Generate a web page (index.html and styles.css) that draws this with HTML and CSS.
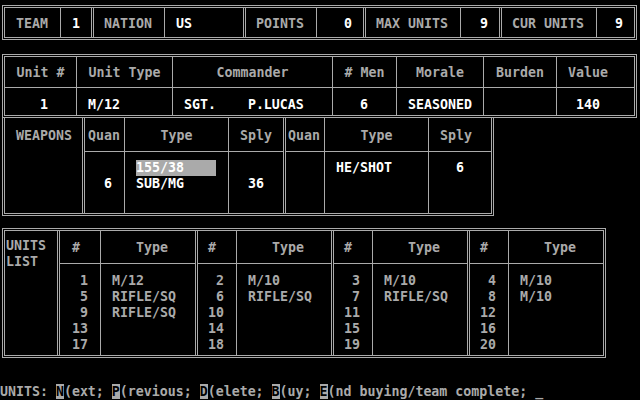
FILE: index.html
```html
<!doctype html>
<html lang="en">
<head>
<meta charset="UTF-8">
<title>Unit purchase</title>
<link rel="stylesheet" href="styles.css">
</head>
<body>
<div class="screen">

    <div class="box topbar">
        <div class="pair g1"><div class="lbl first">TEAM</div><div class="val">1</div></div>
        <div class="pair g2"><div class="lbl">NATION</div><div class="val left">US</div></div>
        <div class="pair g3"><div class="lbl">POINTS</div><div class="val">0</div></div>
        <div class="pair g4"><div class="lbl">MAX UNITS</div><div class="val">9</div></div>
        <div class="pair g5"><div class="lbl">CUR UNITS</div><div class="val">9</div></div>
    </div>

    <div class="box unit">
        <div class="hd">Unit #</div>
        <div class="hd">Unit Type</div>
        <div class="hd">Commander</div>
        <div class="hd"># Men</div>
        <div class="hd">Morale</div>
        <div class="hd">Burden</div>
        <div class="hd pad">Value</div>
        <div class="cell u-num">1</div>
        <div class="cell">M/12</div>
        <div class="cell">SGT.    P.LUCAS</div>
        <div class="cell u-men">6</div>
        <div class="cell">SEASONED</div>
        <div class="cell"></div>
        <div class="cell u-val">140</div>
    </div>

    <div class="box weapons">
        <div class="w-label">WEAPONS</div>
        <div class="wgrp wg1">
            <div class="hd quan">Quan</div>
            <div class="hd">Type</div>
            <div class="hd">Sply</div>
            <div class="cell low q1">6</div>
            <div class="cell type"><span class="sel">155/38</span><br>SUB/MG</div>
            <div class="cell low s1">36</div>
        </div>
        <div class="wgrp wg2">
            <div class="hd quan2">Quan</div>
            <div class="hd">Type</div>
            <div class="hd sply2">Sply</div>
            <div class="cell"></div>
            <div class="cell type">HE/SHOT</div>
            <div class="cell s2">6</div>
        </div>
    </div>

    <div class="box units">
        <div class="l-label">UNITS<br>LIST</div>
        <div class="lgrp first">
            <div class="hd hash">#</div>
            <div class="hd tp">Type</div>
            <div class="cell nums">1<br>5<br>9<br>13<br>17</div>
            <div class="cell types">M/12<br>RIFLE/SQ<br>RIFLE/SQ</div>
        </div>
        <div class="lgrp">
            <div class="hd hash">#</div>
            <div class="hd tp">Type</div>
            <div class="cell nums">2<br>6<br>10<br>14<br>18</div>
            <div class="cell types">M/10<br>RIFLE/SQ</div>
        </div>
        <div class="lgrp">
            <div class="hd hash">#</div>
            <div class="hd tp">Type</div>
            <div class="cell nums">3<br>7<br>11<br>15<br>19</div>
            <div class="cell types">M/10<br>RIFLE/SQ</div>
        </div>
        <div class="lgrp">
            <div class="hd hash">#</div>
            <div class="hd tp">Type</div>
            <div class="cell nums">4<br>8<br>12<br>16<br>20</div>
            <div class="cell types">M/10<br>M/10</div>
        </div>
    </div>

    <div class="status">UNITS: <span class="key">N</span>(ext; <span class="key">P</span>(revious; <span class="key">D</span>(elete; <span class="key">B</span>(uy; <span class="key">E</span>(nd buying/team complete; _</div>

</div>
</body>
</html>
```

FILE: styles.css
```css
* {
    box-sizing: border-box;
}

body {
    margin: 0;
    background-color: #000;
    color: #aaa;
    font: bold 13.288px/16px "DejaVu Sans Mono", monospace;
    overflow: hidden;
}

.screen {
    padding-top: 5px;
}

.box {
    margin-left: 2px;
    border: 3px double #aaa;
}

.lbl, .val, .hd, .cell, .status {
    white-space: pre;
}

/* top bar */

.topbar {
    display: flex;
    width: 635px;
    height: 35px;
}

.pair {
    display: grid;
}

.pair + .pair {
    border-left: 3px double #aaa;
}

.g1 { width: 86px; grid-template-columns: 55px 31px; }
.g2 { width: 152px; grid-template-columns: 70px 79px; }
.g3 { width: 120px; grid-template-columns: 70px 47px; }
.g4 { width: 136px; grid-template-columns: 94px 39px; }
.g5 { width: 135px; grid-template-columns: 94px 38px; }

.lbl {
    padding: 8px 0 5px 10px;
}

.lbl.first {
    padding-left: 11px;
}

.val {
    border-left: 1px solid #aaa;
    padding: 8px 11px 5px 0;
    text-align: right;
    color: #fff;
}

.val.left {
    text-align: left;
    padding-left: 11px;
}

/* unit row */

.unit {
    display: grid;
    grid-template-columns: 71px 96px 160px 64px 87px 73px 78px;
    grid-template-rows: 30px 28px;
    width: 635px;
    margin-top: 14px;
}

.unit > div:not(:nth-child(7n+1)) {
    border-left: 1px solid #aaa;
}

.unit .hd {
    padding-top: 8px;
    text-align: center;
}

.unit .hd.pad {
    text-align: left;
    padding-left: 11px;
}

.unit .cell {
    border-top: 1px solid #aaa;
    padding: 9px 0 0 11px;
    color: #fff;
}

.unit .u-num { padding-left: 35px; }
.unit .u-men { padding-left: 27px; }
.unit .u-val { padding-left: 19px; }

/* weapons */

.weapons {
    display: flex;
    width: 492px;
    height: 98px;
    border-top: 0;
}

.w-label {
    width: 77px;
    padding: 10px 0 0 11px;
}

.wgrp {
    display: grid;
    grid-template-rows: 33px 62px;
    border-left: 3px double #aaa;
}

.wg1 {
    width: 201px;
    grid-template-columns: 39px 104px 55px;
}

.wg2 {
    width: 208px;
    grid-template-columns: 38px 104px 63px;
}

.wgrp > div:not(:nth-child(3n+1)) {
    border-left: 1px solid #aaa;
}

.wgrp .hd {
    padding-top: 10px;
    text-align: center;
}

.wgrp .hd.quan { text-align: left; padding-left: 3px; }
.wgrp .hd.quan2 { text-align: left; padding-left: 2px; }
.wgrp .hd.sply2 { text-align: left; padding-left: 11px; }

.wgrp .cell {
    border-top: 1px solid #aaa;
    padding: 8px 0 0 11px;
    color: #fff;
}

.wgrp .cell.low {
    padding-top: 24px;
}

.wgrp .q1 { padding-left: 19px; }
.wgrp .s1 { padding-left: 19px; }
.wgrp .s2 { padding-left: 27px; }

.sel {
    display: inline-block;
    width: 80px;
    background-color: #aaa;
    color: #fff;
}

/* units list */

.units {
    display: flex;
    width: 604px;
    height: 130px;
    margin-top: 12px;
}

.l-label {
    width: 52px;
    padding: 7px 0 0 1px;
}

.lgrp {
    display: grid;
    width: 136px;
    grid-template-columns: 38px 95px;
    grid-template-rows: 32px 92px;
    border-left: 3px double #aaa;
}

.lgrp.first {
    width: 138px;
    grid-template-columns: 40px 95px;
}

.lgrp .tp,
.lgrp .types {
    border-left: 1px solid #aaa;
}

.lgrp .hd {
    padding-top: 9px;
}

.lgrp .hash {
    text-align: right;
    padding-right: 20px;
}

.lgrp .tp {
    padding-left: 35px;
}

.lgrp .cell {
    border-top: 1px solid #aaa;
    padding-top: 9px;
}

.lgrp .nums {
    text-align: right;
    padding-right: 12px;
}

.lgrp .types {
    padding-left: 11px;
}

/* prompt */

.status {
    margin-top: 26px;
}

.key {
    background-color: #aaa;
    color: #000;
}
```
